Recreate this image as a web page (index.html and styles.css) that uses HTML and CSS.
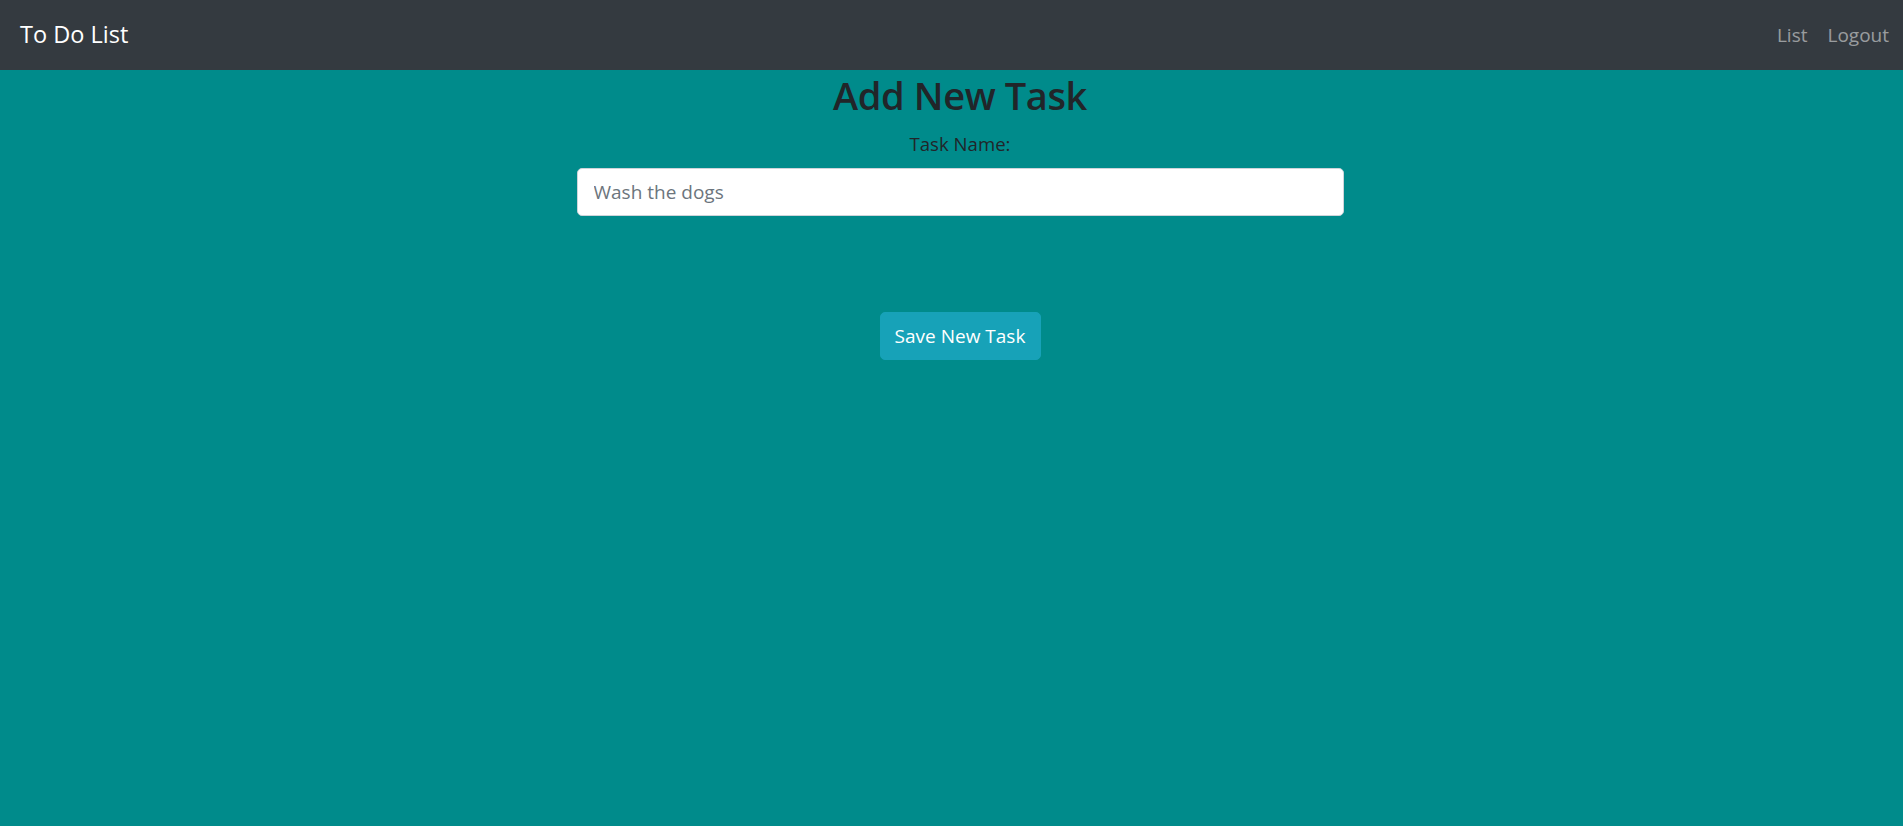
FILE: index.html
```html
<!DOCTYPE html>
<html lang="en">
<head>
<meta charset="utf-8">
<title>To Do List</title>
<link rel="stylesheet" href="styles.css">
</head>
<body>
<nav class="navbar">
  <a class="brand" href="#">To Do List</a>
  <div class="nav-links">
    <a class="nav-link" href="#">List</a>
    <a class="nav-link" href="#">Logout</a>
  </div>
</nav>
<main class="content">
  <h2 class="title">Add New Task</h2>
  <form class="task-form">
    <label class="label" for="task">Task Name:</label>
    <input class="input" id="task" type="text" placeholder="Wash the dogs">
    <button class="btn" type="button">Save New Task</button>
  </form>
</main>
</body>
</html>
```
FILE: styles.css
```css
html, body {
  margin: 0;
  padding: 0;
  height: 100%;
}
body {
  background: #008b8b;
  font-family: "Open Sans", "Noto Sans", sans-serif;
  color: #212529;
  overflow: hidden;
}
.navbar {
  height: 70px;
  background: #343a40;
  display: flex;
  align-items: center;
  justify-content: space-between;
  padding: 0 14px 0 20px;
  box-sizing: border-box;
}
.brand {
  color: #fff;
  text-decoration: none;
  font-size: 23.5px;
  line-height: 30px;
  padding-bottom: 2px;
}
.nav-links {
  display: flex;
  gap: 20px;
}
.nav-link {
  color: rgba(255, 255, 255, 0.5);
  text-decoration: none;
  font-size: 19px;
  line-height: 30px;
}
.content {
  display: flex;
  flex-direction: column;
  align-items: center;
  padding-left: 17px;
}
.title {
  margin: 1px 0 10px;
  font-size: 38px;
  line-height: 48px;
  font-weight: 600;
  letter-spacing: -0.4px;
  color: #212529;
}
.task-form {
  display: flex;
  flex-direction: column;
  align-items: center;
}
.label {
  font-size: 18.6px;
  line-height: 30px;
  margin-bottom: 9px;
}
.input {
  width: 767px;
  height: 48px;
  box-sizing: border-box;
  border: 1px solid #ced4da;
  border-radius: 5px;
  padding: 0 16px;
  font-family: inherit;
  font-size: 19px;
  color: #495057;
  background: #fff;
  outline: none;
}
.input::placeholder {
  color: #6c757d;
}
.btn {
  margin-top: 96px;
  width: 161px;
  height: 48px;
  border: 1px solid #17a2b8;
  border-radius: 5px;
  background: #17a2b8;
  color: #fff;
  font-family: inherit;
  font-size: 19px;
  padding: 0;
  cursor: pointer;
}
```
